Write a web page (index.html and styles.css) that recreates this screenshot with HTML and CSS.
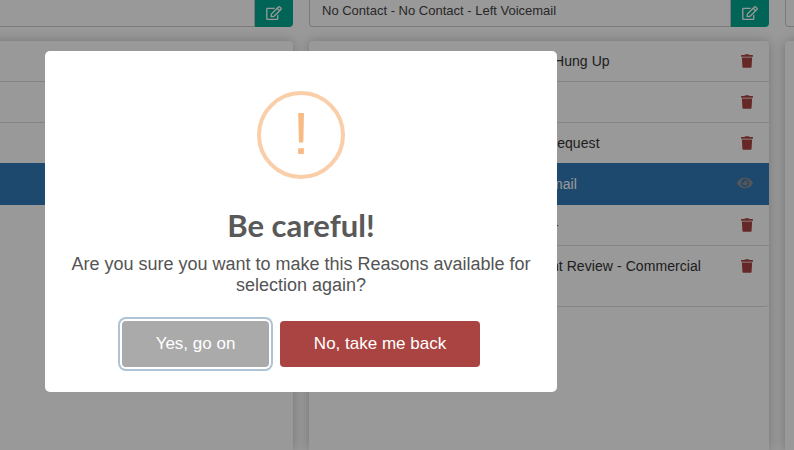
FILE: index.html
```html
<!DOCTYPE html>
<html>
<head>
  <link rel="stylesheet" href="styles.css">
</head>
<body>
  <div class="page">
    <div class="column">
      <div class="search-row">
        <div class="search-box"></div>
        <button class="edit-btn">
          <svg class="icon-edit" viewBox="0 0 576 512"><path d="M402.3 344.9l32-32c5-5 13.7-1.5 13.7 5.7V464c0 26.5-21.5 48-48 48H48c-26.5 0-48-21.5-48-48V112c0-26.5 21.5-48 48-48h273.5c7.1 0 10.7 8.6 5.7 13.7l-32 32c-1.5 1.5-3.5 2.3-5.7 2.3H48v352h352V350.5c0-2.1.8-4.1 2.3-5.6zm156.6-201.8L296.3 405.7l-90.4 10c-26.2 2.9-48.5-19.2-45.6-45.6l10-90.4L432.9 17.1c22.9-22.9 59.9-22.9 82.7 0l43.2 43.2c22.9 22.9 22.9 60 .1 82.8zM460.1 174L402 115.9 216.2 301.8l-7.3 65.3 65.3-7.3L460.1 174zm64.8-79.7l-43.2-43.2c-4.1-4.1-10.8-4.1-14.8 0L436 82l58.1 58.1 30.9-30.9c4-4.2 4-10.8-.1-14.9z"/></svg>
        </button>
      </div>
      <div class="panel">
        <ul class="list">
          <li class="row"></li>
          <li class="row"></li>
          <li class="row row-short"></li>
          <li class="row row-active"></li>
        </ul>
      </div>
    </div>

    <div class="column">
      <div class="search-row">
        <div class="search-box">No Contact - No Contact - Left Voicemail</div>
        <button class="edit-btn">
          <svg class="icon-edit" viewBox="0 0 576 512"><path d="M402.3 344.9l32-32c5-5 13.7-1.5 13.7 5.7V464c0 26.5-21.5 48-48 48H48c-26.5 0-48-21.5-48-48V112c0-26.5 21.5-48 48-48h273.5c7.1 0 10.7 8.6 5.7 13.7l-32 32c-1.5 1.5-3.5 2.3-5.7 2.3H48v352h352V350.5c0-2.1.8-4.1 2.3-5.6zm156.6-201.8L296.3 405.7l-90.4 10c-26.2 2.9-48.5-19.2-45.6-45.6l10-90.4L432.9 17.1c22.9-22.9 59.9-22.9 82.7 0l43.2 43.2c22.9 22.9 22.9 60 .1 82.8zM460.1 174L402 115.9 216.2 301.8l-7.3 65.3 65.3-7.3L460.1 174zm64.8-79.7l-43.2-43.2c-4.1-4.1-10.8-4.1-14.8 0L436 82l58.1 58.1 30.9-30.9c4-4.2 4-10.8-.1-14.9z"/></svg>
        </button>
      </div>
      <div class="panel">
        <ul class="list">
          <li class="row">
            <span>No Contact - No Contact - Customer Hung Up</span>
            <svg class="icon-trash" viewBox="0 0 448 512"><path d="M432 32H312l-9.4-18.7A24 24 0 0 0 281.1 0H166.8a23.72 23.72 0 0 0-21.4 13.3L136 32H16A16 16 0 0 0 0 48v32a16 16 0 0 0 16 16h416a16 16 0 0 0 16-16V48a16 16 0 0 0-16-16zM53.2 467a48 48 0 0 0 47.9 45h245.8a48 48 0 0 0 47.9-45L416 128H32z"/></svg>
          </li>
          <li class="row">
            <span>No Contact - No Answer</span>
            <svg class="icon-trash" viewBox="0 0 448 512"><path d="M432 32H312l-9.4-18.7A24 24 0 0 0 281.1 0H166.8a23.72 23.72 0 0 0-21.4 13.3L136 32H16A16 16 0 0 0 0 48v32a16 16 0 0 0 16 16h416a16 16 0 0 0 16-16V48a16 16 0 0 0-16-16zM53.2 467a48 48 0 0 0 47.9 45h245.8a48 48 0 0 0 47.9-45L416 128H32z"/></svg>
          </li>
          <li class="row row-short">
            <span>No Contact - No Contact - Callback Request</span>
            <svg class="icon-trash" viewBox="0 0 448 512"><path d="M432 32H312l-9.4-18.7A24 24 0 0 0 281.1 0H166.8a23.72 23.72 0 0 0-21.4 13.3L136 32H16A16 16 0 0 0 0 48v32a16 16 0 0 0 16 16h416a16 16 0 0 0 16-16V48a16 16 0 0 0-16-16zM53.2 467a48 48 0 0 0 47.9 45h245.8a48 48 0 0 0 47.9-45L416 128H32z"/></svg>
          </li>
          <li class="row row-active">
            <span>No Contact - No Contact - Left Voicemail</span>
            <svg class="icon-eye" viewBox="0 0 576 512"><path d="M572.52 241.4C518.29 135.59 410.93 64 288 64S57.68 135.64 3.48 241.41a32.35 32.35 0 0 0 0 29.19C57.71 376.41 165.07 448 288 448s230.32-71.64 284.52-177.41a32.35 32.35 0 0 0 0-29.19zM288 400a144 144 0 1 1 144-144 143.93 143.93 0 0 1-144 144zm0-240a95.31 95.31 0 0 0-25.31 3.79 47.85 47.85 0 0 1-66.9 66.9A95.78 95.78 0 1 0 288 160z"/></svg>
          </li>
          <li class="row">
            <span>No Contact - Wrong Numbers Listed -</span>
            <svg class="icon-trash" viewBox="0 0 448 512"><path d="M432 32H312l-9.4-18.7A24 24 0 0 0 281.1 0H166.8a23.72 23.72 0 0 0-21.4 13.3L136 32H16A16 16 0 0 0 0 48v32a16 16 0 0 0 16 16h416a16 16 0 0 0 16-16V48a16 16 0 0 0-16-16zM53.2 467a48 48 0 0 0 47.9 45h245.8a48 48 0 0 0 47.9-45L416 128H32z"/></svg>
          </li>
          <li class="row row-tall">
            <span>No Contact - No Callers - Appointment Review - Commercial</span>
            <svg class="icon-trash" viewBox="0 0 448 512"><path d="M432 32H312l-9.4-18.7A24 24 0 0 0 281.1 0H166.8a23.72 23.72 0 0 0-21.4 13.3L136 32H16A16 16 0 0 0 0 48v32a16 16 0 0 0 16 16h416a16 16 0 0 0 16-16V48a16 16 0 0 0-16-16zM53.2 467a48 48 0 0 0 47.9 45h245.8a48 48 0 0 0 47.9-45L416 128H32z"/></svg>
          </li>
        </ul>
      </div>
    </div>

    <div class="column">
      <div class="search-row">
        <div class="search-box"></div>
      </div>
      <div class="panel"></div>
    </div>
  </div>

  <div class="overlay">
    <div class="modal">
      <div class="warn-icon">!</div>
      <h2 class="modal-title">Be careful!</h2>
      <p class="modal-text">Are you sure you want to make this Reasons available for selection again?</p>
      <div class="modal-actions">
        <button class="btn btn-confirm">Yes, go on</button>
        <button class="btn btn-cancel">No, take me back</button>
      </div>
    </div>
  </div>
</body>
</html>
```

FILE: styles.css
```css
html, body {
  margin: 0;
  height: 100%;
  overflow: hidden;
}

body {
  background-color: #fff;
  font-family: "Liberation Sans", Arial, sans-serif;
  color: #333;
}

.page {
  display: flex;
  gap: 16px;
  height: 450px;
  margin-left: -167px;
}

.column {
  display: flex;
  flex-direction: column;
  flex: 0 0 460px;
  gap: 14px;
}

.search-row {
  display: flex;
  height: 27px;
  flex: none;
}

.search-box {
  flex: 1;
  padding: 1px 12px 0;
  font-size: 13px;
  line-height: 19px;
  border: 1px solid #ccc;
  border-top: 0;
  border-radius: 0 0 0 4px;
  color: #444;
}

.edit-btn {
  display: flex;
  align-items: center;
  justify-content: center;
  width: 38px;
  padding: 0 0 2px;
  background-color: #00a98f;
  border: 0;
  border-radius: 0 0 4px 0;
}

.icon-edit {
  width: 16px;
  height: 14px;
  fill: #fff;
}

.panel {
  flex: 1;
  background-color: #fff;
  border-radius: 4px 4px 0 0;
  box-shadow: 0 0 12px rgba(0, 0, 0, 0.25);
}

.list {
  margin: 0;
  padding: 0;
  list-style: none;
}

.row {
  display: flex;
  justify-content: space-between;
  align-items: flex-start;
  box-sizing: border-box;
  height: 41px;
  padding: 12px 16px 0 13px;
  font-size: 14px;
  line-height: 16px;
  letter-spacing: 0.07px;
  border-bottom: 1px solid #ddd;
}

.row-short {
  height: 40px;
  border-bottom: 0;
}

.row-active {
  height: 42px;
  padding-top: 13px;
  background-color: #337ab7;
  color: #fff;
  border-bottom: 0;
}

.row-tall {
  height: 61px;
  border-radius: 0 0 4px 4px;
}

.icon-trash {
  width: 12px;
  height: 14px;
  margin: 1px 0 0;
  fill: #a94442;
}

.icon-eye {
  width: 16px;
  height: 14px;
  fill: #8f8f8f;
}

.overlay {
  position: absolute;
  inset: 0;
  display: flex;
  align-items: flex-start;
  padding: 51px 0 0 45px;
  background-color: rgba(0, 0, 0, 0.4);
}

.modal {
  box-sizing: border-box;
  width: 512px;
  height: 341px;
  padding: 40px 16px 0;
  background-color: #fff;
  border-radius: 5px;
  text-align: center;
}

.warn-icon {
  box-sizing: border-box;
  width: 88px;
  height: 88px;
  margin: 0 auto;
  border: 4px solid #facea8;
  border-radius: 50%;
  font-size: 60px;
  line-height: 78px;
  color: #f8bb86;
}

.modal-title {
  margin: 27px 0 0;
  font-family: Lato, sans-serif;
  font-size: 31px;
  font-weight: 700;
  line-height: 38px;
  color: #595959;
}

.modal-text {
  margin: 10px 0 0;
  font-size: 18px;
  line-height: 21px;
  color: #545454;
}

.modal-actions {
  display: flex;
  justify-content: center;
  gap: 11px;
  margin-top: 25px;
}

.btn {
  height: 46px;
  font-family: inherit;
  font-size: 17px;
  color: #fff;
  border: 0;
  border-radius: 4px;
}

.btn-confirm {
  width: 147px;
  background-color: #aaa;
  box-shadow: 0 0 0 2px #fff, 0 0 0 4px #aec3d6;
}

.btn-cancel {
  width: 200px;
  background-color: #a94442;
}
```
